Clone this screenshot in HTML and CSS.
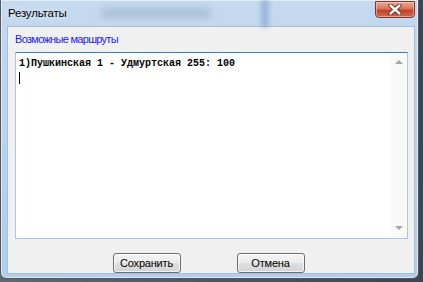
FILE: index.html
```html
<!DOCTYPE html>
<html lang="ru">

<head>
  <meta charset="UTF-8">
  <title>Результаты</title>
  <link rel="stylesheet" href="styles.css">
</head>

<body>
  <div class="window">
    <div class="titlebar">
      <span class="title">Результаты</span>
      <div class="glass-blur"></div>
      <div class="glass-streak"></div>
      <button class="close-btn" aria-label="Закрыть">
        <svg width="16" height="11" viewBox="0 0 16 11">
          <path d="M3.5 1.5 L12.5 9.5 M12.5 1.5 L3.5 9.5" stroke="#5a2018" stroke-width="4.2" stroke-linecap="round" />
          <path d="M3.5 1.5 L12.5 9.5 M12.5 1.5 L3.5 9.5" stroke="#ffffff" stroke-width="2.4" stroke-linecap="round" />
        </svg>
      </button>
    </div>
    <div class="client">
      <div class="label">Возможные маршруты</div>
      <div class="textbox">
        <div class="text-content">
          <div class="line">1)Пушкинская 1 - Удмуртская 255: 100</div>
          <div class="line"><span class="caret"></span></div>
        </div>
        <div class="scrollbar">
          <div class="arrow arrow-up"></div>
          <div class="arrow arrow-down"></div>
        </div>
      </div>
      <div class="buttons">
        <button class="btn">Сохранить</button>
        <button class="btn">Отмена</button>
      </div>
    </div>
  </div>
</body>

</html>
```

FILE: styles.css
```css
* {
  box-sizing: border-box;
}

body {
  margin: 0;
  width: 423px;
  height: 282px;
  overflow: hidden;
  background: linear-gradient(to right, #5d6874 0%, #3c4650 100%);
  font-family: "Liberation Sans", "DejaVu Sans", sans-serif;
}

.window {
  width: 419px;
  height: 279px;
  border: 1px solid #4f5a66;
  border-top: none;
  border-radius: 0 0 6px 6px;
  background: linear-gradient(to bottom, #c5d9ef 0%, #bcd3eb 40%, #b4cde8 100%);
  padding: 0 3px 4px 6px;
  display: flex;
  flex-direction: column;
  box-shadow: inset 0 0 0 1px rgba(255, 255, 255, 0.5);
}

.titlebar {
  height: 27px;
  position: relative;
  display: flex;
  align-items: center;
}

.title {
  font-size: 11.5px;
  color: #000000;
  padding-left: 1px;
  margin-top: -1px;
  letter-spacing: -0.2px;
  text-shadow: 0 0 6px rgba(255, 255, 255, 0.9);
}

.glass-blur {
  position: absolute;
  left: 94px;
  top: 8px;
  width: 110px;
  height: 10px;
  background: rgba(120, 140, 170, 0.3);
  filter: blur(3px);
  border-radius: 4px;
}

.glass-streak {
  position: absolute;
  left: 254px;
  top: 0;
  width: 8px;
  height: 27px;
  background: rgba(80, 120, 180, 0.35);
  filter: blur(2px);
}

.close-btn {
  position: absolute;
  right: 0;
  top: 1px;
  width: 40px;
  height: 17px;
  padding: 0;
  border: 1px solid #7a3a30;
  border-radius: 0 0 4px 4px;
  background: linear-gradient(to bottom, #e9a996 0%, #d9755f 45%, #c0432b 55%, #d6664a 100%);
  box-shadow: inset 0 0 0 1px rgba(255, 220, 200, 0.5);
  display: flex;
  align-items: center;
  justify-content: center;
}

.client {
  flex: 1;
  background: #f0f0f0;
  border: 1px solid #a5bfdb;
  display: flex;
  flex-direction: column;
  padding: 0 6px 0 7px;
}

.label {
  font-size: 11px;
  letter-spacing: -0.7px;
  color: #1a1aff;
  height: 25px;
  padding-top: 6px;
  margin-left: 0;
}

.textbox {
  height: 187px;
  background: #ffffff;
  border: 1px solid #a9c6e6;
  border-top-color: #3d7bbf;
  display: flex;
}

.text-content {
  flex: 1;
  padding: 4px 0 0 3px;
  font-family: "Liberation Mono", "Courier New", monospace;
  font-size: 10px;
  font-weight: bold;
  color: #000000;
  line-height: 13px;
}

.caret {
  display: inline-block;
  width: 1px;
  height: 12px;
  background: #000000;
  vertical-align: top;
  margin-top: 2px;
}

.scrollbar {
  width: 15px;
  margin: 0 1px 1px 0;
  background: repeating-conic-gradient(#f4f4f4 0 25%, #ffffff 0 50%) 0 0 / 2px 2px;
  display: flex;
  flex-direction: column;
  justify-content: space-between;
  align-items: center;
  padding: 7px 0 7px;
}

.arrow {
  width: 0;
  height: 0;
  border-left: 4px solid transparent;
  border-right: 4px solid transparent;
}

.arrow-up {
  border-bottom: 4px solid #a6a6a6;
}

.arrow-down {
  border-top: 4px solid #a6a6a6;
}

.buttons {
  display: flex;
  justify-content: center;
  gap: 56px;
  margin-top: 14px;
  padding-right: 6px;
}

.btn {
  width: 68px;
  height: 20px;
  font-family: "Liberation Sans", "DejaVu Sans", sans-serif;
  font-size: 11px;
  letter-spacing: -0.2px;
  color: #000000;
  border: 1px solid #707070;
  border-radius: 3px;
  background: linear-gradient(to bottom, #f4f4f4 0%, #ececec 50%, #dfdfdf 51%, #d4d4d4 100%);
  box-shadow: inset 0 0 0 1px rgba(255, 255, 255, 0.7);
  padding: 0;
}
```
